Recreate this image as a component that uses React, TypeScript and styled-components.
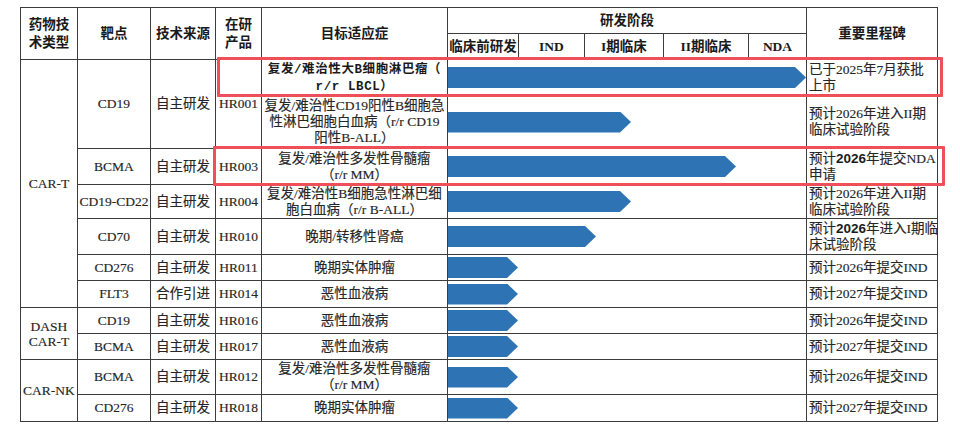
import React from "react";
import styled, { createGlobalStyle } from "styled-components";

const GlobalStyle = createGlobalStyle`
  html, body { margin: 0; padding: 0; background: #ffffff; }
  body { font-family: "Liberation Serif", "Noto Sans CJK SC", serif; }
`;

const LINE = "#3c3c3c";

const Page = styled.div`
  padding: 7px 0 0 20px;
`;

const Frame = styled.div`
  position: relative;
  width: max-content;
`;

const Grid = styled.div`
  display: grid;
  grid-template-columns: 57px 73px 65px 46px 186px 71px 66px 79px 85px 58px 131px;
  grid-template-rows: 26px 26px 36px 53px 36px 34px 36px 26px 27px 26px 26px 35px 27px;
  border-top: 1px solid ${LINE};
  border-left: 1px solid ${LINE};
  font-family: "Liberation Serif", "Noto Sans CJK SC", serif;
  font-size: 13.5px;
  color: #262626;
  -webkit-text-stroke: 0.15px #262626;
`;

const Cell = styled.div<{ $c: string; $r: string; $left?: boolean }>`
  grid-column: ${(p) => p.$c};
  grid-row: ${(p) => p.$r};
  border-right: 1px solid ${LINE};
  border-bottom: 1px solid ${LINE};
  display: flex;
  align-items: center;
  justify-content: ${(p) => (p.$left ? "flex-start" : "center")};
  text-align: ${(p) => (p.$left ? "left" : "center")};
  padding-left: ${(p) => (p.$left ? "2px" : "0")};
  line-height: 16px;
  white-space: nowrap;
  min-width: 0;
`;

const HeadCell = styled(Cell)`
  font-weight: bold;
  color: #1a1a1a;
  -webkit-text-stroke: 0;
  line-height: 18px;
`;

const GroupCell = styled(Cell)`
  line-height: 15px;
`;

const BarCell = styled(Cell)`
  justify-content: flex-start;
`;

const Bar = styled.div<{ $w: number }>`
  width: ${(p) => p.$w}px;
  height: 21px;
  background: #2e74b5;
  clip-path: polygon(0 0, calc(100% - 11px) 0, 100% 50%, calc(100% - 11px) 100%, 0 100%);
`;

const MonoText = styled.span`
  font-family: "Liberation Mono", "Noto Sans CJK SC", monospace;
  font-weight: bold;
  font-size: 12.5px;
  letter-spacing: 0.6px;
  color: #1a1a1a;
  -webkit-text-stroke: 0;
`;

const SansBold = styled.span`
  font-family: "Liberation Sans", "Noto Sans", sans-serif;
  font-weight: bold;
  color: #1a1a1a;
  -webkit-text-stroke: 0;
`;

const Highlight = styled.div<{ $x: number; $y: number; $w: number; $h: number }>`
  position: absolute;
  left: ${(p) => p.$x}px;
  top: ${(p) => p.$y}px;
  width: ${(p) => p.$w}px;
  height: ${(p) => p.$h}px;
  box-sizing: border-box;
  border: 3px solid #ef4f58;
  border-radius: 1px;
  pointer-events: none;
`;

type Row = {
  indication: React.ReactNode;
  bar: number;
  milestone: React.ReactNode;
};

const rows: Row[] = [
  {
    indication: (
      <MonoText>
        复发/难治性大B细胞淋巴瘤（
        <br />
        r/r LBCL）
      </MonoText>
    ),
    bar: 359,
    milestone: (
      <>
        已于2025年7月获批
        <br />
        上市
      </>
    ),
  },
  {
    indication: (
      <>
        复发/难治性CD19阳性B细胞急
        <br />
        性淋巴细胞白血病（r/r CD19
        <br />
        阳性B-ALL）
      </>
    ),
    bar: 183,
    milestone: (
      <>
        预计2026年进入II期
        <br />
        临床试验阶段
      </>
    ),
  },
  {
    indication: (
      <>
        复发/难治性多发性骨髓瘤
        <br />
        （r/r MM）
      </>
    ),
    bar: 288,
    milestone: (
      <>
        预计<SansBold>2026</SansBold>年提交NDA
        <br />
        申请
      </>
    ),
  },
  {
    indication: (
      <>
        复发/难治性B细胞急性淋巴细
        <br />
        胞白血病（r/r B-ALL）
      </>
    ),
    bar: 183,
    milestone: (
      <>
        预计2026年进入II期
        <br />
        临床试验阶段
      </>
    ),
  },
  {
    indication: <>晚期/转移性肾癌</>,
    bar: 148,
    milestone: (
      <>
        预计<SansBold>2026</SansBold>年进入I期临
        <br />
        床试验阶段
      </>
    ),
  },
  { indication: <>晚期实体肿瘤</>, bar: 70, milestone: <>预计2026年提交IND</> },
  { indication: <>恶性血液病</>, bar: 70, milestone: <>预计2027年提交IND</> },
  { indication: <>恶性血液病</>, bar: 70, milestone: <>预计2026年提交IND</> },
  { indication: <>恶性血液病</>, bar: 70, milestone: <>预计2027年提交IND</> },
  {
    indication: (
      <>
        复发/难治性多发性骨髓瘤
        <br />
        （r/r MM）
      </>
    ),
    bar: 70,
    milestone: <>预计2026年提交IND</>,
  },
  { indication: <>晚期实体肿瘤</>, bar: 70, milestone: <>预计2027年提交IND</> },
];

type Left = { row: string; target: string; source: string; product: string };

const leftCells: Left[] = [
  { row: "3 / 5", target: "CD19", source: "自主研发", product: "HR001" },
  { row: "5", target: "BCMA", source: "自主研发", product: "HR003" },
  { row: "6", target: "CD19-CD22", source: "自主研发", product: "HR004" },
  { row: "7", target: "CD70", source: "自主研发", product: "HR010" },
  { row: "8", target: "CD276", source: "自主研发", product: "HR011" },
  { row: "9", target: "FLT3", source: "合作引进", product: "HR014" },
  { row: "10", target: "CD19", source: "自主研发", product: "HR016" },
  { row: "11", target: "BCMA", source: "自主研发", product: "HR017" },
  { row: "12", target: "BCMA", source: "自主研发", product: "HR012" },
  { row: "13", target: "CD276", source: "自主研发", product: "HR018" },
];

export default function App() {
  return (
    <Page>
      <GlobalStyle />
      <Frame>
        <Grid>
          <HeadCell $c="1" $r="1 / 3">
            药物技
            <br />
            术类型
          </HeadCell>
          <HeadCell $c="2" $r="1 / 3">靶点</HeadCell>
          <HeadCell $c="3" $r="1 / 3">技术来源</HeadCell>
          <HeadCell $c="4" $r="1 / 3">
            在研
            <br />
            产品
          </HeadCell>
          <HeadCell $c="5" $r="1 / 3">目标适应症</HeadCell>
          <HeadCell $c="6 / 11" $r="1">研发阶段</HeadCell>
          <HeadCell $c="11" $r="1 / 3">重要里程碑</HeadCell>
          <HeadCell $c="6" $r="2">临床前研发</HeadCell>
          <HeadCell $c="7" $r="2">IND</HeadCell>
          <HeadCell $c="8" $r="2">I期临床</HeadCell>
          <HeadCell $c="9" $r="2">II期临床</HeadCell>
          <HeadCell $c="10" $r="2">NDA</HeadCell>

          <GroupCell $c="1" $r="3 / 10">CAR-T</GroupCell>
          <GroupCell $c="1" $r="10 / 12">
            DASH
            <br />
            CAR-T
          </GroupCell>
          <GroupCell $c="1" $r="12 / 14">CAR-NK</GroupCell>

          {leftCells.map((l) => (
            <React.Fragment key={l.product}>
              <Cell $c="2" $r={l.row}>{l.target}</Cell>
              <Cell $c="3" $r={l.row}>{l.source}</Cell>
              <Cell $c="4" $r={l.row}>{l.product}</Cell>
            </React.Fragment>
          ))}

          {rows.map((r, i) => (
            <React.Fragment key={i}>
              <Cell $c="5" $r={String(i + 3)}>
                <div>{r.indication}</div>
              </Cell>
              <BarCell $c="6 / 11" $r={String(i + 3)}>
                <Bar $w={r.bar} />
              </BarCell>
              <Cell $c="11" $r={String(i + 3)} $left>
                <div>{r.milestone}</div>
              </Cell>
            </React.Fragment>
          ))}
        </Grid>
        <Highlight $x={197} $y={50} $w={726} $h={40} />
        <Highlight $x={193} $y={139} $w={732} $h={40} />
      </Frame>
    </Page>
  );
}
